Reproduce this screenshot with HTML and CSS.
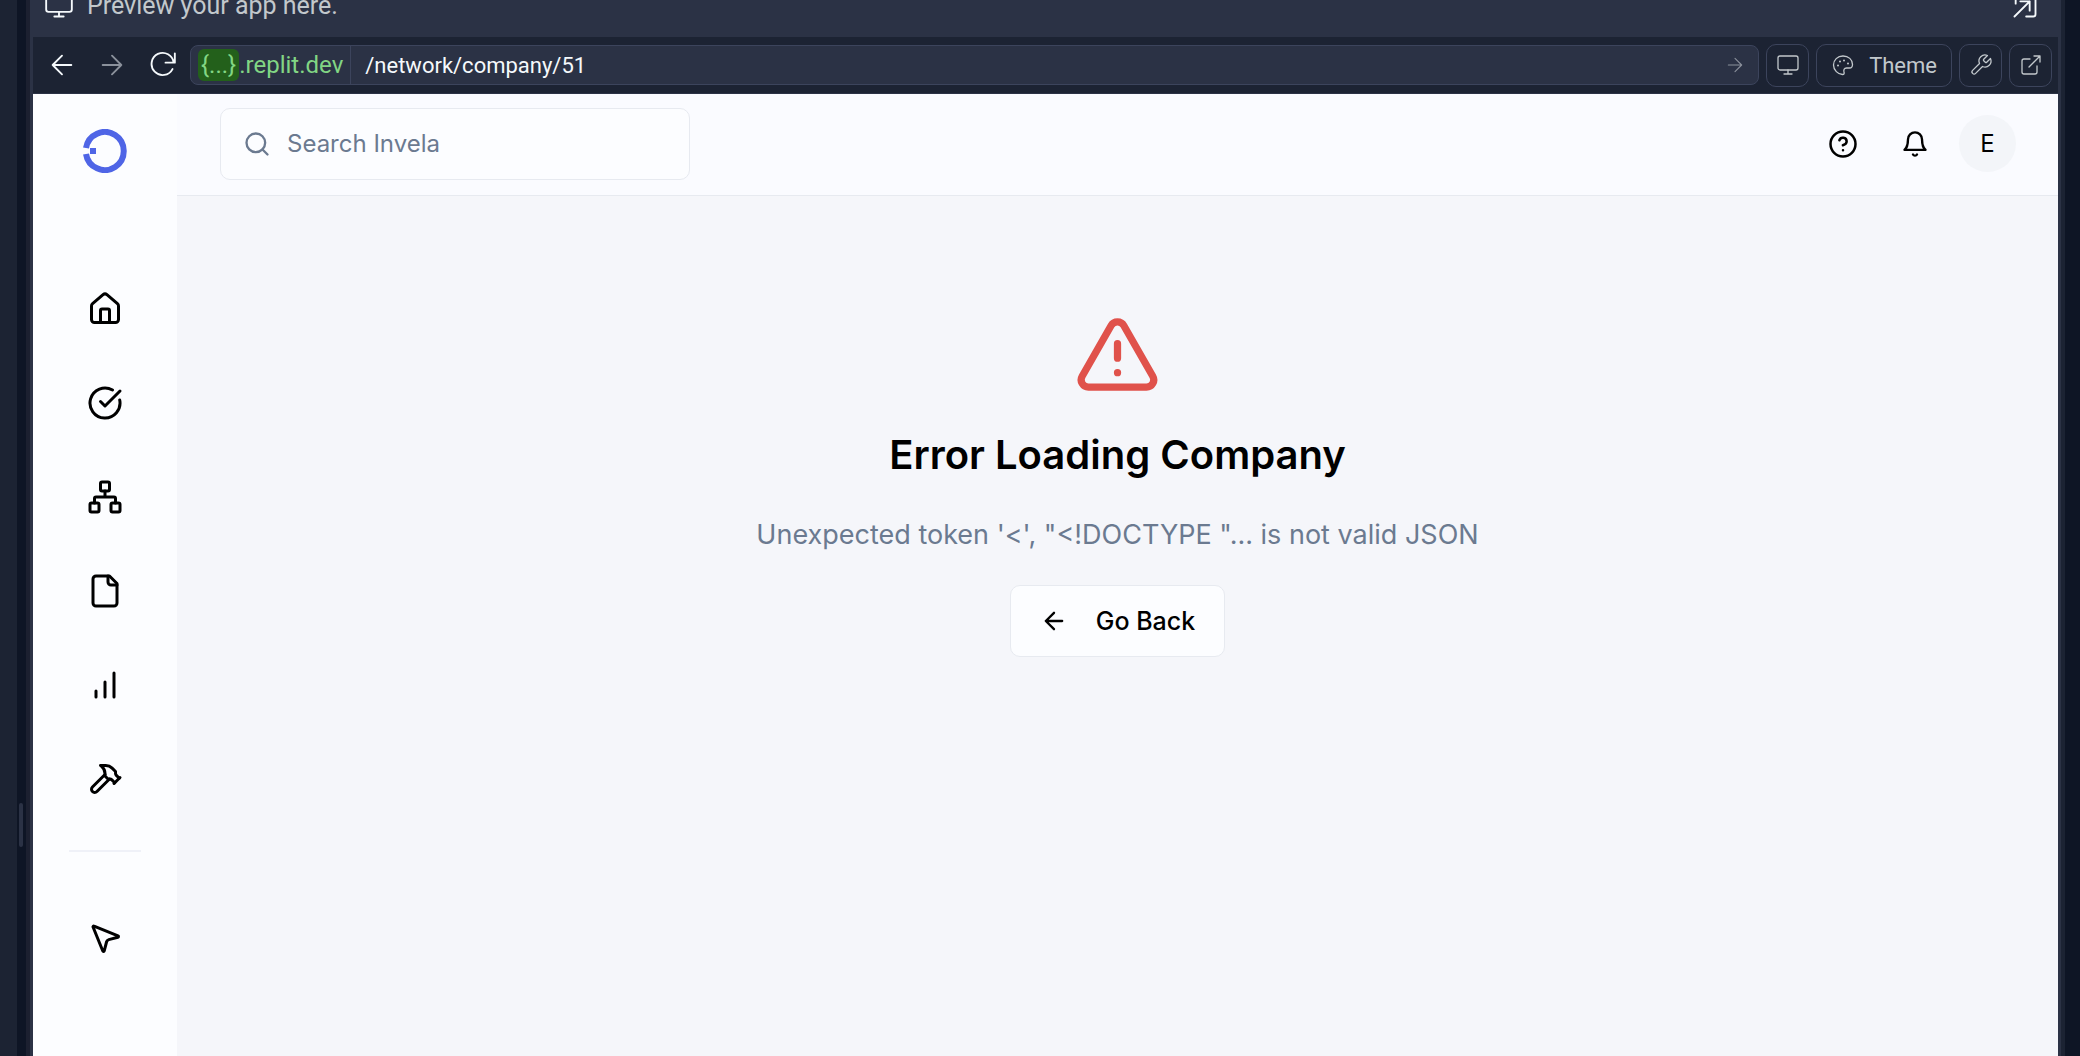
FILE: index.html
```html
<!DOCTYPE html>
<html lang="en">
<head>
<meta charset="utf-8">
<title>Preview</title>
<link rel="stylesheet" href="styles.css">
</head>
<body>
<div class="workspace">
  <div class="pane-edge"></div>
  <div class="splitter"><span class="splitter-grip"></span></div>
  <section class="webview">
    <div class="banner">
      <svg class="i28" viewBox="0 0 24 24"><rect x="1" y="1" width="22" height="16" rx="2"/><path d="M12 17v4M8 21h8"/></svg>
      <p>Preview your app here.</p>
      <button class="plain banner-open" aria-label="Open"><svg class="i28" viewBox="0 0 24 24"><path d="M4 10V5a2 2 0 0 1 2-2h13a2 2 0 0 1 2 2v14a2 2 0 0 1-2 2h-6M3 21L16 8M8 8h8v8"/></svg></button>
    </div>
    <div class="toolbar">
      <button class="plain nav" aria-label="Back"><svg class="i28" viewBox="0 0 24 24"><path d="M20 12H4M12 4l-8 8 8 8"/></svg></button>
      <button class="plain nav dim" aria-label="Forward"><svg class="i28" viewBox="0 0 24 24"><path d="M4 12h16M12 4l8 8-8 8"/></svg></button>
      <button class="plain nav" aria-label="Reload"><svg class="i28" viewBox="0 0 24 24"><path d="M23 2v8h-8M22 10A9.500 9.500 0 1 0 21 15.500"/></svg></button>
      <div class="address">
        <span class="host"><span class="host-tag">{...}</span>.replit.dev</span>
        <input class="path" type="text" value="/network/company/51" aria-label="Path">
        <button class="plain go" aria-label="Go"><svg class="i20" viewBox="0 0 24 24"><path d="M4 12h16M12 4l8 8-8 8"/></svg></button>
      </div>
      <button class="tool" aria-label="Device size"><svg class="i24" viewBox="0 0 24 24"><rect x="2" y="3" width="20" height="14" rx="2"/><path d="M12 17v4M8 21h8"/></svg></button>
      <button class="tool theme"><svg class="i24" viewBox="0 0 24 24"><path d="M12 3C6.500 3 2.500 7 2.500 12S7 21.500 11.500 21.500c1.500 0 2-1 1.500-2.500-.5-2 0-4 2.500-4h3c2 0 3-1.500 3-3.500C21.500 6.500 17.500 3 12 3z"/><path class="dots" d="M7 12.500h0M9 8.500h0M13 7.500h0M17 10.500h0"/></svg>Theme</button>
      <button class="tool" aria-label="Developer tools"><svg class="i24" viewBox="0 0 24 24"><path d="M14.700 6.300a1 1 0 0 0 0 1.400l1.600 1.600a1 1 0 0 0 1.400 0l3.770-3.770a6 6 0 0 1-7.940 7.940l-6.910 6.910a2.120 2.120 0 0 1-3-3l6.910-6.910a6 6 0 0 1 7.940-7.940l-3.760 3.760z"/></svg></button>
      <button class="tool" aria-label="New tab"><svg class="i24" viewBox="0 0 24 24"><path d="M18 13v6a2 2 0 0 1-2 2H5a2 2 0 0 1-2-2V8a2 2 0 0 1 2-2h6M15 3h6v6M10 14L21 3"/></svg></button>
    </div>
    <div class="app">
      <nav class="sidebar" aria-label="Main">
        <a class="logo" href="#" aria-label="Invela"><svg viewBox="0 0 44 44"><path d="M3 19A19 19 0 1 1 3 25" /><rect x="7" y="19" width="6" height="6"/></svg></a>
        <a class="item" href="#" aria-label="Home"><svg viewBox="0 0 24 24"><path d="M15 21v-8a1 1 0 0 0-1-1h-4a1 1 0 0 0-1 1v8"/><path d="M3 10a2 2 0 0 1 .709-1.528l7-6a2 2 0 0 1 2.582 0l7 6A2 2 0 0 1 21 10v9a2 2 0 0 1-2 2H5a2 2 0 0 1-2-2z"/></svg></a>
        <a class="item" href="#" aria-label="Tasks"><svg viewBox="0 0 24 24"><path d="M21.801 10A10 10 0 1 1 17 3.335"/><path d="m9 11 3 3L22 4"/></svg></a>
        <a class="item" href="#" aria-label="Network"><svg viewBox="0 0 24 24"><rect x="16" y="16" width="6" height="6" rx="1"/><rect x="2" y="16" width="6" height="6" rx="1"/><rect x="9" y="2" width="6" height="6" rx="1"/><path d="M5 16v-3a1 1 0 0 1 1-1h12a1 1 0 0 1 1 1v3M12 12V8"/></svg></a>
        <a class="item" href="#" aria-label="Files"><svg viewBox="0 0 24 24"><path d="M15 2H6a2 2 0 0 0-2 2v16a2 2 0 0 0 2 2h12a2 2 0 0 0 2-2V7z"/><path d="M14 2v4a2 2 0 0 0 2 2h4"/></svg></a>
        <a class="item" href="#" aria-label="Insights"><svg viewBox="0 0 24 24"><path d="M12 20V10M18 20V4M6 20v-4"/></svg></a>
        <a class="item" href="#" aria-label="Builder"><svg viewBox="0 0 24 24"><path d="m15 12-8.373 8.373a1 1 0 1 1-3-3L12 9"/><path d="m18 15 4-4"/><path d="m21.500 11.500-1.914-1.914A2 2 0 0 1 19 8.172V7l-2.260-2.260a6 6 0 0 0-4.202-1.756L9 2.960l.92.820A6.180 6.180 0 0 1 12 8.400V10l2 2h1.172a2 2 0 0 1 1.414.586L18.500 14.500"/></svg></a>
        <hr>
        <a class="item" href="#" aria-label="Playground"><svg viewBox="0 0 24 24"><path d="M4.037 4.688a.495.495 0 0 1 .651-.651l16 6.500a.5.5 0 0 1-.063.947l-6.124 1.580a2 2 0 0 0-1.438 1.435l-1.579 6.126a.5.5 0 0 1-.947.063z"/></svg></a>
      </nav>
      <div class="page">
        <header class="topbar">
          <label class="search"><svg class="i28" viewBox="0 0 24 24"><circle cx="11" cy="11" r="8"/><path d="m21 21-4.300-4.300"/></svg><input type="search" placeholder="Search Invela" aria-label="Search Invela"></label>
          <div class="actions">
            <button class="plain action" aria-label="Help"><svg class="i30" viewBox="0 0 24 24"><circle cx="12" cy="12" r="10"/><path d="M9.090 9a3 3 0 0 1 5.830 1c0 2-3 3-3 3M12 17h.01"/></svg></button>
            <button class="plain action" aria-label="Notifications"><svg class="i28" viewBox="0 0 24 24"><path d="M10.268 21a2 2 0 0 0 3.464 0"/><path d="M6 8a6 6 0 0 1 12 0c0 7 3 9 3 9H3s3-2 3-9"/></svg></button>
            <button class="plain avatar" aria-label="Account">E</button>
          </div>
        </header>
        <main class="error">
          <svg class="warning" viewBox="0 0 24 24"><path d="m21.730 18-8-14a2 2 0 0 0-3.480 0l-8 14A2 2 0 0 0 4 21h16a2 2 0 0 0 1.730-3"/><path d="M12 9v4M12 17h.01"/></svg>
          <h1>Error Loading Company</h1>
          <p>Unexpected token '&lt;', "&lt;!DOCTYPE "... is not valid JSON</p>
          <button class="back"><svg class="i28" viewBox="0 0 24 24"><path d="m12 19-7-7 7-7M19 12H5"/></svg>Go Back</button>
        </main>
      </div>
    </div>
  </section>
  <div class="right-edge"></div>
</div>
</body>
</html>
```
FILE: styles.css
```css
* { box-sizing: border-box; }
body { margin: 0; background: #0e1525; font-family: Inter, "Liberation Sans", sans-serif; color: #000; }
button, input { font: inherit; color: inherit; }
svg { fill: none; stroke: currentColor; stroke-width: 2; stroke-linecap: round; stroke-linejoin: round; flex: none; display: block; }
.i20 { width: 20px; height: 20px; }
.i24 { width: 24px; height: 24px; }
.i28 { width: 28px; height: 28px; }
.i30 { width: 30px; height: 30px; }
.plain { border: 0; padding: 0; background: none; display: flex; align-items: center; justify-content: center; }

.workspace { display: flex; min-height: 100vh; }
.pane-edge { width: 17px; background: #1c2333; }
.splitter { width: 9px; position: relative; }
.splitter-grip { position: absolute; left: 2px; top: 76%; width: 4px; height: 44px; border-radius: 2px; background: #2b3245; }
.webview { flex: 1; display: flex; flex-direction: column; background: #1c2333; border-left: 4px solid #1c2030; border-right: 4px solid #1c2333; overflow: hidden; }
.right-edge { width: 15px; }

.banner { height: 36px; background: #2b3245; color: #c2c8cc; display: flex; align-items: flex-end; gap: 14px; padding: 0 22px 16px 15px; font-family: Roboto, sans-serif; font-size: 25px; line-height: 28px; }
.banner p { margin: 0; }
.banner svg { stroke: #f5f9fc; stroke-width: 1.6; }
.banner-open { margin-left: auto; }

.toolbar { height: 58px; display: flex; align-items: center; gap: 7px; padding: 0 6px 0 7px; border: 3px solid #2b3245; border-width: 1px 3px; background: #1c2333; color: #c2c8cc; font-family: Roboto, sans-serif; font-size: 22px; }
.toolbar svg { stroke-width: 1.3; }
.nav { width: 43px; height: 40px; color: #f5f9fc; }
.nav.dim { color: #8b919c; }
.toolbar .nav svg { stroke-width: 1.6; }
.address { flex: 1; height: 40px; display: flex; align-items: center; border: 1px solid #3c445c; border-radius: 8px; background: #2b3245; }
.host { display: flex; align-items: center; height: 38px; padding: 0 7px; border-right: 1px solid #3c445c; color: #82d684; font-size: 24px; }
.host-tag { background: #23601b; border-radius: 6px; padding: 2px 3px; line-height: 28px; }
.path { flex: 1; min-width: 0; border: 0; outline: 0; background: none; padding: 0 14px; color: #f5f9fc; }
.go { width: 46px; color: #8b919c; }
.tool { height: 43px; min-width: 43px; padding: 0; display: flex; align-items: center; justify-content: center; gap: 14px; border: 1px solid #3c445c; border-radius: 10px; background: none; }
.theme { padding: 0 14px; }
.toolbar .dots { stroke-width: 2; }

.app { flex: 1; display: flex; border: 3px solid #2b3245; border-width: 0 3px; background: #f5f6fa; }
.sidebar { width: 144px; background: #fcfdff; display: flex; flex-direction: column; align-items: center; padding-top: 35px; }
.logo { width: 44px; height: 44px; margin-bottom: 89px; }
.logo svg { stroke: #4f65e6; stroke-width: 6; stroke-linecap: butt; }
.logo rect { fill: #4f65e6; stroke: none; }
.item { height: 94px; display: flex; align-items: center; color: #000; }
.item svg { width: 36px; height: 36px; }
.sidebar hr { width: 72px; height: 2px; margin: 24px 0 39px; border: 0; background: #eff1f8; }

.page { flex: 1; }
.topbar { height: 102px; display: flex; align-items: center; justify-content: space-between; padding: 0 42px 2px 43px; background: #fafbff; border-bottom: 1px solid #e7eaf0; }
.search { width: 470px; height: 72px; display: flex; align-items: center; gap: 16px; padding: 0 22px; border: 1px solid #e7eaf0; border-radius: 10px; background: #fcfdff; color: #6b7a90; }
.search input { flex: 1; min-width: 0; border: 0; outline: 0; padding: 0; background: none; font-size: 24px; }
.search input::placeholder { color: #6b7a90; opacity: 1; }
.actions { display: flex; align-items: center; }
.action { width: 72px; height: 72px; }
.avatar { width: 57px; height: 57px; margin-left: 8px; border-radius: 50%; background: #f3f5f9; font-size: 24px; }

.error { display: flex; flex-direction: column; align-items: center; padding-top: 115px; }
.warning { width: 87px; height: 87px; color: #e0524b; }
.error h1 { margin: 29px 0 30px; font-size: 40px; line-height: 56px; font-weight: 600; }
.error p { margin: 0 0 28px; color: #6b7a90; font-size: 27px; line-height: 44px; }
.back { height: 72px; padding: 0 29px; display: flex; align-items: center; gap: 28px; border: 1px solid #e7eaf0; border-radius: 10px; background: #fcfdff; font-size: 25px; font-weight: 500; }
```
